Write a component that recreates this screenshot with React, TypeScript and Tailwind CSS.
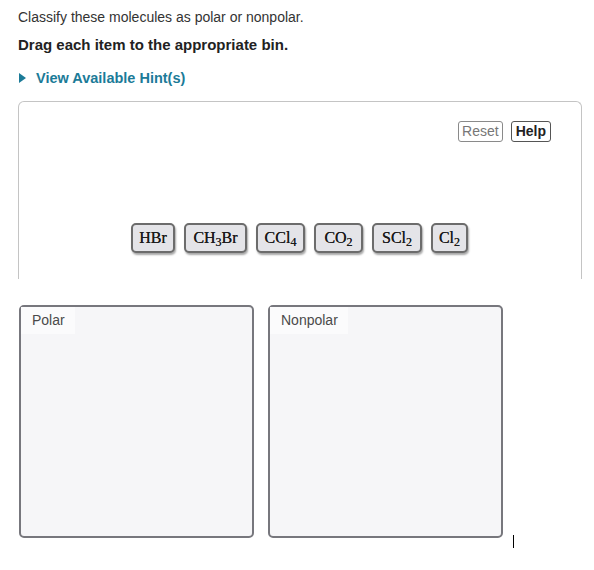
import React from "react";

const ITEMS: { key: string; base: string; sub?: string; tail?: string; w: number }[] = [
  { key: "HBr", base: "HBr", w: 44 },
  { key: "CH3Br", base: "CH", sub: "3", tail: "Br", w: 63 },
  { key: "CCl4", base: "CCl", sub: "4", w: 49 },
  { key: "CO2", base: "CO", sub: "2", w: 49 },
  { key: "SCl2", base: "SCl", sub: "2", w: 50 },
  { key: "Cl2", base: "Cl", sub: "2", w: 37 },
];

function Bin({ label }: { label: string }) {
  return (
    <div className="w-[235px] h-[233px] rounded-[5px] border-2 border-[#77777d] bg-[#f6f6f8]">
      <div className="inline-block bg-[#fbfbfc] pl-[11px] pr-[10px] pt-[5px] pb-[5px] text-[14px] leading-[17px] text-[#4a4a4a]">
        {label}
      </div>
    </div>
  );
}

export default function App() {
  return (
    <div className="w-[594px] h-[570px] bg-white relative" style={{ fontFamily: '"Liberation Sans", Arial, sans-serif' }}>
      <div className="pl-[18px] pr-[12px]">
        <p className="pt-[9px] text-[14px] leading-[16px] text-[#333]">Classify these molecules as polar or nonpolar.</p>
        <p className="mt-[12px] text-[15px] leading-[16px] font-bold text-[#222]">Drag each item to the appropriate bin.</p>
        <div className="mt-[17px] flex items-center text-[14.5px] leading-[16px] font-bold text-[#1c7b98]">
          <svg width="7" height="10" viewBox="0 0 7 10" className="ml-[1px] mr-[10px]">
            <path d="M0 0 L7 5 L0 10 Z" fill="#1c7b98" />
          </svg>
          View Available Hint(s)
        </div>

        <div className="mt-[15px] h-[178px] w-[564px] rounded-t-[6px] border border-b-0 border-[#c4c4c4]">
          <div className="flex justify-end gap-[8px] pt-[19px] pr-[30px]">
            <button className="h-[21px] px-[3px] rounded-[3px] border border-[#8a8a8a] bg-white text-[14px] leading-[17px] text-[#777]">
              Reset
            </button>
            <button className="h-[21px] px-[4px] rounded-[3px] border border-[#555] bg-white text-[14px] leading-[17px] font-bold text-[#222]">
              Help
            </button>
          </div>
          <div className="flex gap-[9px] pl-[112px] mt-[81px]" style={{ fontFamily: '"Liberation Serif", "Times New Roman", serif' }}>
            {ITEMS.map((it) => (
              <div
                key={it.key}
                style={{ width: it.w }}
                className="h-[30px] flex items-center justify-center rounded-[5px] border-2 border-[#6c6c6c] bg-[#e4e4e8] shadow-[1px_2px_2px_rgba(0,0,0,0.35)] text-[16px] text-[#1a1a1a]"
              >
                <span className="[text-shadow:0_0_0.4px_#222]">
                  {it.base}
                  {it.sub && <span className="text-[12px] relative top-[3px]">{it.sub}</span>}
                  {it.tail}
                </span>
              </div>
            ))}
          </div>
        </div>

        <div className="mt-[26px] flex gap-[14px] pl-[1px]">
          <Bin label="Polar" />
          <Bin label="Nonpolar" />
        </div>
      </div>
      <div className="absolute left-[513px] top-[535px] w-[1px] h-[13px] bg-black" />
    </div>
  );
}
